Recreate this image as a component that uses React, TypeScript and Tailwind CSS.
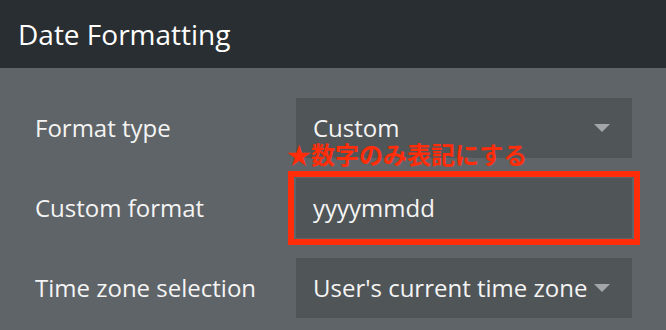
export default function App() {
  const rows = [
    { label: 'Format type', value: 'Custom', kind: 'select' },
    { label: 'Custom format', value: 'yyyymmdd', kind: 'input' },
    { label: 'Time zone selection', value: "User's current time zone", kind: 'select' },
  ];

  return (
    <div className="w-[666px] h-[330px] overflow-hidden bg-[#5f6468] font-['Open_Sans',sans-serif] text-[#f4f4f4]">
      {/* Header */}
      <div className="h-[68px] bg-[#282e31] flex items-center pl-[18px]">
        <h1 className="text-[28px] leading-none text-white">Date Formatting</h1>
      </div>

      {/* Body */}
      <div className="relative flex flex-col gap-5 pt-[30px] pl-[35px] pr-[34px]">
        {rows.map((row) => (
          <div key={row.label} className="flex items-center h-[60px]">
            <div className="w-[261px] text-[24px] leading-none">{row.label}</div>
            <div className="relative flex-1 h-full">
              {row.kind === 'input' && (
                <div className="absolute -inset-x-[8px] -inset-y-[7px] border-[6px] border-[#ff2d0a]" />
              )}
              <div className="relative h-full bg-[#505558] flex items-center pl-[17px] pr-[22px]">
                <span className="flex-1 text-[24px] leading-none whitespace-nowrap">{row.value}</span>
                {row.kind === 'select' && (
                  <svg width="16" height="8" viewBox="0 0 16 8" className="shrink-0 ml-1">
                    <path d="M0 0 L16 0 L8 8 Z" fill="#a3a6a9" />
                  </svg>
                )}
              </div>
            </div>
          </div>
        ))}

        {/* Annotation */}
        <div className="absolute left-[287px] top-[74px] text-[24px] leading-none font-bold text-[#ff2d0a] font-['Noto_Sans_CJK_JP',sans-serif] whitespace-nowrap">
          ★数字のみ表記にする
        </div>
      </div>
    </div>
  );
}
